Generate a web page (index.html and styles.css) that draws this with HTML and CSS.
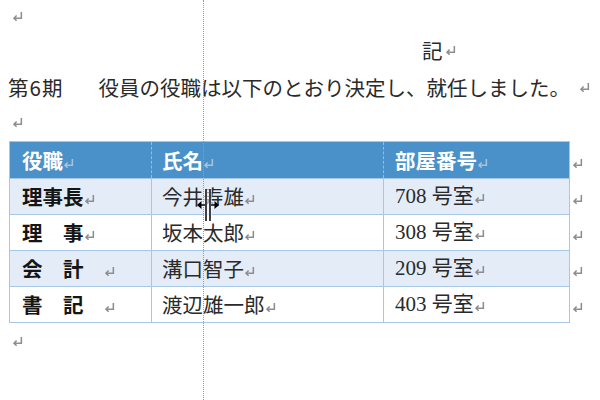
FILE: index.html
```html
<!DOCTYPE html>
<html lang="ja">
<head>
<meta charset="utf-8">
<link rel="stylesheet" href="styles.css">
</head>
<body>
<div class="page">
  <div class="line l1"><svg class="rm" viewBox="0 0 10 10"><path d="M8.5 1V6.5H1.8M4.2 4.1L1.8 6.5L4.2 8.9"/></svg></div>
  <div class="line l2 title">記<svg class="rm" viewBox="0 0 10 10"><path d="M8.5 1V6.5H1.8M4.2 4.1L1.8 6.5L4.2 8.9"/></svg></div>
  <div class="line l3">第<span class="num">6</span>期<span class="gap">　</span>役員の役職は以下のとおり決定し、就任しました。<svg class="rm rm-end" viewBox="0 0 10 10"><path d="M8.5 1V6.5H1.8M4.2 4.1L1.8 6.5L4.2 8.9"/></svg></div>
  <div class="line l4"><svg class="rm" viewBox="0 0 10 10"><path d="M8.5 1V6.5H1.8M4.2 4.1L1.8 6.5L4.2 8.9"/></svg></div>

  <table class="roster">
    <tr class="head">
      <th class="c1">役職<svg class="rm rm-h" viewBox="0 0 10 10"><path d="M8.5 1V6.5H1.8M4.2 4.1L1.8 6.5L4.2 8.9"/></svg></th>
      <th class="c2">氏名<svg class="rm rm-h" viewBox="0 0 10 10"><path d="M8.5 1V6.5H1.8M4.2 4.1L1.8 6.5L4.2 8.9"/></svg></th>
      <th class="c3">部屋番号<svg class="rm rm-h" viewBox="0 0 10 10"><path d="M8.5 1V6.5H1.8M4.2 4.1L1.8 6.5L4.2 8.9"/></svg></th>
      <td class="end"><svg class="rm" viewBox="0 0 10 10"><path d="M8.5 1V6.5H1.8M4.2 4.1L1.8 6.5L4.2 8.9"/></svg></td>
    </tr>
    <tr class="odd">
      <td class="c1">理事長<svg class="rm" viewBox="0 0 10 10"><path d="M8.5 1V6.5H1.8M4.2 4.1L1.8 6.5L4.2 8.9"/></svg></td>
      <td class="c2">今井寿雄<svg class="rm" viewBox="0 0 10 10"><path d="M8.5 1V6.5H1.8M4.2 4.1L1.8 6.5L4.2 8.9"/></svg></td>
      <td class="c3">708 号室<svg class="rm" viewBox="0 0 10 10"><path d="M8.5 1V6.5H1.8M4.2 4.1L1.8 6.5L4.2 8.9"/></svg></td>
      <td class="end"><svg class="rm" viewBox="0 0 10 10"><path d="M8.5 1V6.5H1.8M4.2 4.1L1.8 6.5L4.2 8.9"/></svg></td>
    </tr>
    <tr>
      <td class="c1">理　事<svg class="rm" viewBox="0 0 10 10"><path d="M8.5 1V6.5H1.8M4.2 4.1L1.8 6.5L4.2 8.9"/></svg></td>
      <td class="c2">坂本太郎<svg class="rm" viewBox="0 0 10 10"><path d="M8.5 1V6.5H1.8M4.2 4.1L1.8 6.5L4.2 8.9"/></svg></td>
      <td class="c3">308 号室<svg class="rm" viewBox="0 0 10 10"><path d="M8.5 1V6.5H1.8M4.2 4.1L1.8 6.5L4.2 8.9"/></svg></td>
      <td class="end"><svg class="rm" viewBox="0 0 10 10"><path d="M8.5 1V6.5H1.8M4.2 4.1L1.8 6.5L4.2 8.9"/></svg></td>
    </tr>
    <tr class="odd">
      <td class="c1">会　計　<svg class="rm" viewBox="0 0 10 10"><path d="M8.5 1V6.5H1.8M4.2 4.1L1.8 6.5L4.2 8.9"/></svg></td>
      <td class="c2">溝口智子<svg class="rm" viewBox="0 0 10 10"><path d="M8.5 1V6.5H1.8M4.2 4.1L1.8 6.5L4.2 8.9"/></svg></td>
      <td class="c3">209 号室<svg class="rm" viewBox="0 0 10 10"><path d="M8.5 1V6.5H1.8M4.2 4.1L1.8 6.5L4.2 8.9"/></svg></td>
      <td class="end"><svg class="rm" viewBox="0 0 10 10"><path d="M8.5 1V6.5H1.8M4.2 4.1L1.8 6.5L4.2 8.9"/></svg></td>
    </tr>
    <tr>
      <td class="c1">書　記　<svg class="rm" viewBox="0 0 10 10"><path d="M8.5 1V6.5H1.8M4.2 4.1L1.8 6.5L4.2 8.9"/></svg></td>
      <td class="c2">渡辺雄一郎<svg class="rm" viewBox="0 0 10 10"><path d="M8.5 1V6.5H1.8M4.2 4.1L1.8 6.5L4.2 8.9"/></svg></td>
      <td class="c3">403 号室<svg class="rm" viewBox="0 0 10 10"><path d="M8.5 1V6.5H1.8M4.2 4.1L1.8 6.5L4.2 8.9"/></svg></td>
      <td class="end"><svg class="rm" viewBox="0 0 10 10"><path d="M8.5 1V6.5H1.8M4.2 4.1L1.8 6.5L4.2 8.9"/></svg></td>
    </tr>
  </table>

  <div class="line l5"><svg class="rm" viewBox="0 0 10 10"><path d="M8.5 1V6.5H1.8M4.2 4.1L1.8 6.5L4.2 8.9"/></svg></div>

  <div class="guide"></div>
  <svg class="cursor" viewBox="0 0 24 34" width="24" height="34">
    <g fill="none" stroke="#fff" stroke-width="3.2">
      <path d="M10 1V33M14 1V33M3 17H9M15 17H21"/>
    </g>
    <g fill="none" stroke="#000" stroke-width="1.5">
      <path d="M10 1V33M14 1V33M3 17H9M15 17H21"/>
    </g>
    <path d="M1 17L5.5 13V21Z M23 17L18.5 13V21Z" fill="#000"/>
  </svg>
</div>
</body>
</html>
```

FILE: styles.css
```css
html, body {
  margin: 0;
  padding: 0;
  background: #fff;
}

.page {
  position: relative;
  width: 600px;
  height: 400px;
  overflow: hidden;
  font-family: "Noto Sans CJK JP", sans-serif;
  font-size: 20.5px;
  color: #2a2a2a;
  padding-left: 8px;
  box-sizing: border-box;
}

.line {
  display: flex;
  align-items: center;
  white-space: nowrap;
  line-height: 1;
}

.l1 { height: 32px; padding-left: 4px; }
.l2 { height: 36px; padding-left: 414px; }
.l3 { height: 38px; }
.l4 { height: 32px; padding-left: 4px; }
.l5 { height: 36px; padding-left: 4px; }

.num {
  padding: 0 1px;
}

.gap {
  display: inline-block;
  width: 36px;
}

.rm {
  width: 11px;
  height: 11px;
  flex: none;
  display: inline-block;
  vertical-align: middle;
}

.rm path {
  fill: none;
  stroke: #8e8e8e;
  stroke-width: 1.4;
}

.title .rm { margin-left: 2px; }
.rm-end { margin-left: 9px; }

.roster {
  border-collapse: collapse;
  margin-top: 3px;
  margin-left: 1px;
  table-layout: fixed;
}

.roster th,
.roster td {
  border: 1px solid #a7c7e7;
  padding: 0;
  text-align: left;
  white-space: nowrap;
  line-height: 1;
  vertical-align: middle;
}

.roster tr { height: 36px; }
.roster tr.head { height: 37px; }

.roster .c1 { width: 129px; padding-left: 12px; font-weight: bold; color: #151515; }
.roster .c2 { width: 221px; padding-left: 10px; }
.roster .c3 {
  width: 174px;
  padding-left: 11px;
  font-family: "Liberation Serif", "Noto Sans CJK JP", serif;
  font-size: 21px;
}

.roster .head th {
  background: #4a91c9;
  color: #fff;
  font-weight: bold;
  font-size: 20.5px;
  font-family: "Noto Sans CJK JP", sans-serif;
}

.roster .head th.c1 { border-right: 1px dashed #b4b4b4; }
.roster .head th.c2 { border-left: 1px dashed #b4b4b4; border-right: 1px dashed #b4b4b4; }
.roster .head th.c3 { border-left: 1px dashed #b4b4b4; }

.roster tr.odd td { background: #e3ecf7; }

.roster td.end,
.roster tr.odd td.end {
  border: none;
  background: transparent;
  width: 20px;
  padding-left: 2px;
}

.rm-h path { stroke: #a9c2d8; }

.guide {
  position: absolute;
  left: 203px;
  top: 0;
  bottom: 0;
  border-left: 1px dotted #9a9a9a;
}

.cursor {
  position: absolute;
  left: 196px;
  top: 188px;
}
```
